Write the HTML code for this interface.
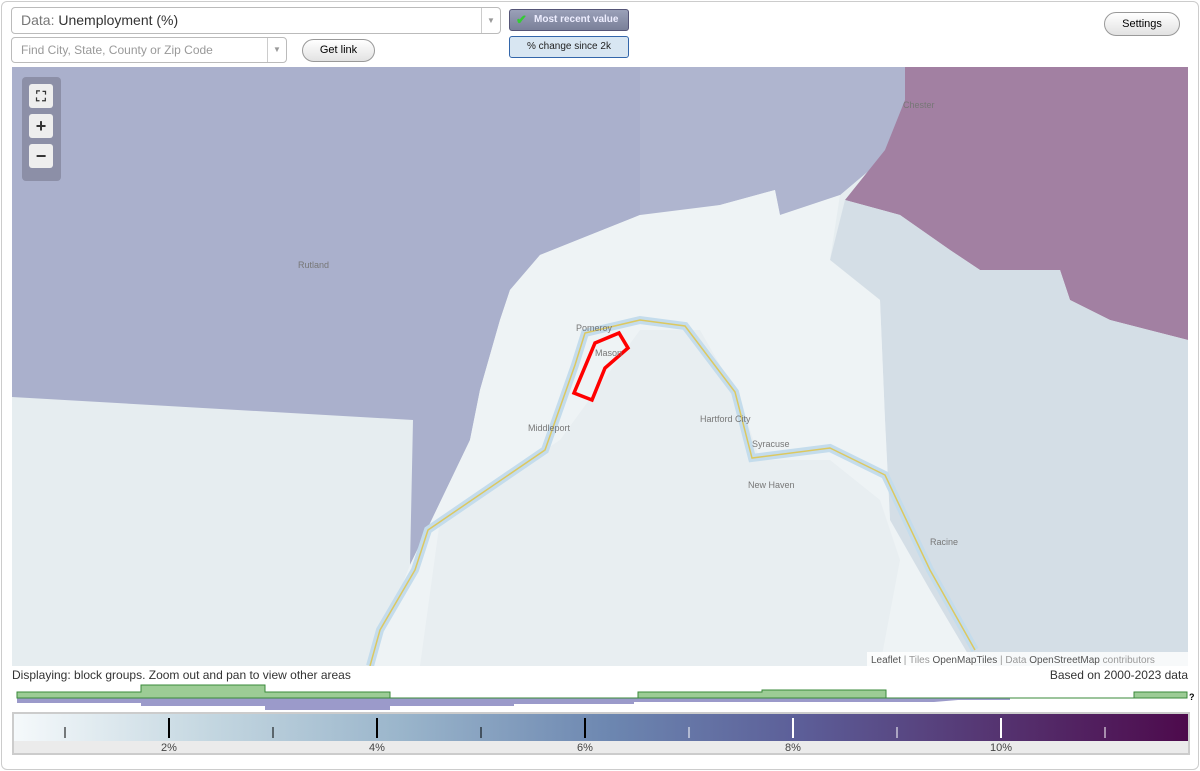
<!DOCTYPE html><html><head><style>
body{margin:0;width:1200px;height:771px;background:#fff;font-family:"Liberation Sans",sans-serif;overflow:hidden;position:relative}
.frame{position:absolute;left:1px;top:1px;width:1196px;height:767px;border:1px solid #ccc;border-radius:6px}
.sel{position:absolute;background:#fff;border:1px solid #bbb;border-radius:4px;box-sizing:border-box}
.arr{position:absolute;right:0;top:0;bottom:0;width:18px;border-left:1px solid #ccc;color:#999;font-size:8px;text-align:center}
.btn{position:absolute;border:1px solid #999;border-radius:12px;background:linear-gradient(#fff,#e2e2e2);font-size:11px;text-align:center;box-sizing:border-box}
.zb{position:absolute;left:29px;width:24px;height:24px;background:#eee;border-radius:3px;text-align:center;font-weight:bold;line-height:24px;font-size:18px;color:#333}
</style></head><body>
<div class="frame"></div>
<div class="sel" style="left:11px;top:7px;width:490px;height:27px;font-size:14px;color:#333;line-height:25px;padding-left:9px"><span style="color:#777">Data:</span> Unemployment (%)<div class="arr" style="line-height:25px">▼</div></div>
<div class="sel" style="left:11px;top:37px;width:276px;height:26px;font-size:12px;color:#999;line-height:24px;padding-left:9px">Find City, State, County or Zip Code<div class="arr" style="line-height:24px">▼</div></div>
<div class="btn" style="left:302px;top:39px;width:73px;height:23px;line-height:21px">Get link</div>
<div style="position:absolute;left:509px;top:9px;width:120px;height:22px;border:1px solid #557;border-radius:3px;background:linear-gradient(#9aa0b8,#7a8099);box-sizing:border-box;color:#eef;font-size:10px;font-weight:bold;line-height:20px;padding-left:24px">Most recent value<span style="position:absolute;left:6px;top:0;color:#3c3;font-size:13px">✔</span></div>
<div style="position:absolute;left:509px;top:36px;width:120px;height:22px;border:1px solid #36a;border-radius:3px;background:#d8e6f2;box-sizing:border-box;font-size:10px;line-height:20px;text-align:center;color:#222">% change since 2k</div>
<div class="btn" style="left:1104px;top:12px;width:76px;height:24px;line-height:22px">Settings</div>

<svg style="position:absolute;left:12px;top:67px" width="1176" height="599" viewBox="12 67 1176 599">
<rect x="12" y="67" width="1176" height="599" fill="#e6edf0"/>
<polygon points="12,67 905,67 905,140 840,195 780,215 775,190 760,188 720,205 660,215 640,215 590,235 540,255 510,290 500,320 480,390 470,440 410,565 413,420 12,397" fill="#aab0cc"/>
<polygon points="640,67 905,67 905,140 840,195 780,215 775,190 720,205 650,215 640,215" fill="#afb5cf"/>
<polygon points="905,67 1188,67 1188,340 1110,320 1070,300 1060,270 980,270 950,250 900,215 845,200 885,150 905,100" fill="#a280a2"/>
<polygon points="845,200 900,215 950,250 980,270 1060,270 1070,300 1110,320 1188,340 1188,666 975,666 930,590 890,520 885,420 880,300 830,260" fill="#d4dee6"/>
<polygon points="540,255 590,235 640,215 720,205 775,190 780,215 840,195 830,260 880,300 885,420 890,520 930,590 975,666 370,666 410,565 470,440 480,390 500,320 510,290" fill="#eef3f5"/>
<polygon points="440,520 560,440 640,330 700,330 740,400 760,460 830,460 880,500 900,560 880,666 420,666" fill="#e8eef1"/>
<polyline points="370,666 380,630 415,570 428,530 545,450 575,365 585,333 640,320 685,326 735,392 752,458 830,448 885,475 930,570 975,650" fill="none" stroke="#c4dcec" stroke-width="8"/>
<polyline points="370,666 380,630 415,570 428,530 545,450 575,365 585,333 640,320 685,326 735,392 752,458 830,448 885,475 930,570 975,650" fill="none" stroke="#dcc860" stroke-width="1.5"/>
<polygon points="595,343 619,333 628,348 605,368 592,400 574,393" fill="none" stroke="#f00" stroke-width="3.5"/>
<g font-size="9" fill="#777" font-family="Liberation Sans">
<text x="298" y="268">Rutland</text><text x="903" y="108">Chester</text><text x="576" y="331">Pomeroy</text><text x="595" y="356">Mason</text><text x="528" y="431">Middleport</text><text x="700" y="422">Hartford City</text><text x="752" y="447">Syracuse</text><text x="748" y="488">New Haven</text><text x="930" y="545">Racine</text></g>
<rect x="867" y="652" width="321" height="14" fill="rgba(255,255,255,.8)"/>
<text x="871" y="663" font-size="10" fill="#999"><tspan fill="#555">Leaflet</tspan> | Tiles <tspan fill="#555">OpenMapTiles</tspan> | Data <tspan fill="#555">OpenStreetMap</tspan> contributors</text>
</svg>
<div style="position:absolute;left:22px;top:77px;width:39px;height:104px;background:rgba(110,110,130,.5);border-radius:4px"></div>
<div class="zb" style="top:84px;font-size:14px">⛶</div><div class="zb" style="top:114px">+</div><div class="zb" style="top:144px">−</div>

<div style="position:absolute;left:12px;top:668px;font-size:12px;color:#333">Displaying: block groups. Zoom out and pan to view other areas</div>
<div style="position:absolute;right:12px;top:668px;font-size:12px;color:#333">Based on 2000-2023 data</div>
<svg style="position:absolute;left:0;top:680px" width="1200" height="32">
<polygon points="17,18 17,12 141,12 141,5 265,5 265,12 390,12 390,18 1010,18 1010,20 958,20 934,22 742,22 742,22 634,22 634,24 514,24 514,26 390,26 390,30 265,30 265,26 141,26 141,23 17,23" fill="#9b9aca"/>
<polygon points="17,18 17,12 141,12 141,5 265,5 265,12 390,12 390,18 638,18 638,12 762,12 762,10 886,10 886,18 1134,18 1134,12 1187,12 1187,18" fill="#9ccc95" stroke="#3a8a3a" stroke-width="1"/>
<text x="1189" y="20" font-size="9" font-weight="bold">?</text></svg>
<div style="position:absolute;left:12px;top:712px;width:1178px;height:43px;border:2px solid #ccc;box-sizing:border-box;background:#ebebeb">
<div style="position:absolute;left:0;top:0;right:0;height:27px;background:linear-gradient(90deg,#f5f9fb,#c3d6e0 17%,#9ab5cb 33%,#6c86b0 51%,#5c5e98 67%,#553370 84%,#4d0a4c)"></div></div>
<svg style="position:absolute;left:0;top:712px" width="1200" height="45" font-size="11" fill="#444" font-family="Liberation Sans">
<g stroke="#000" stroke-width="1"><line x1="65" y1="15" x2="65" y2="26"/><line x1="273" y1="15" x2="273" y2="26"/><line x1="481" y1="15" x2="481" y2="26"/></g>
<g stroke="#000" stroke-width="2"><line x1="169" y1="6" x2="169" y2="26"/><line x1="377" y1="6" x2="377" y2="26"/><line x1="585" y1="6" x2="585" y2="26"/></g>
<g stroke="#fff" stroke-width="1"><line x1="689" y1="15" x2="689" y2="26"/><line x1="897" y1="15" x2="897" y2="26"/><line x1="1105" y1="15" x2="1105" y2="26"/></g>
<g stroke="#fff" stroke-width="2"><line x1="793" y1="6" x2="793" y2="26"/><line x1="1001" y1="6" x2="1001" y2="26"/></g>
<text x="161" y="39">2%</text><text x="369" y="39">4%</text><text x="577" y="39">6%</text><text x="785" y="39">8%</text><text x="990" y="39">10%</text></svg>
</body></html>
